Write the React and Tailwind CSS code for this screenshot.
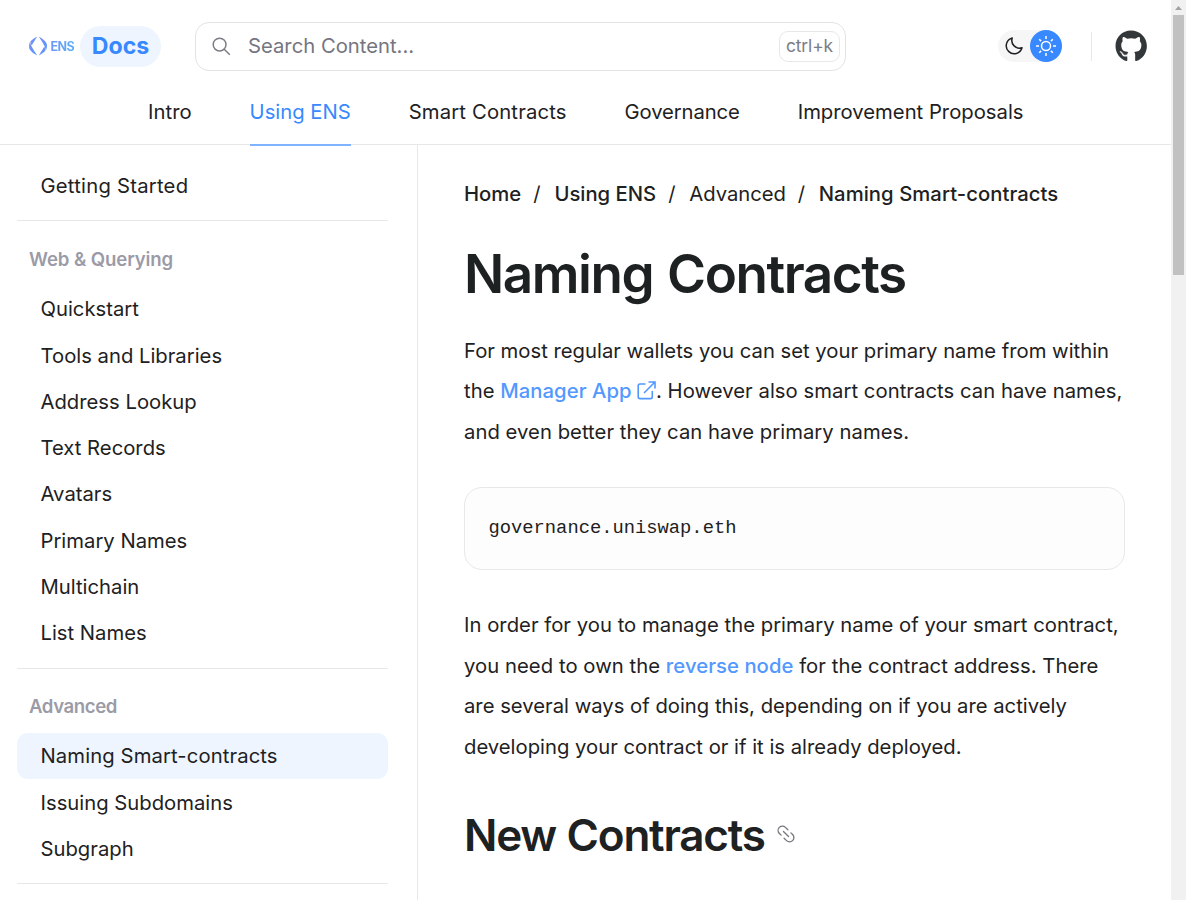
import React from "react";
import { FaGithub } from "react-icons/fa";

const nav = [
  { label: "Intro", track: "tracking-[0.05px]" },
  { label: "Using ENS", track: "tracking-[0px]" },
  { label: "Smart Contracts", track: "tracking-[0.16px]" },
  { label: "Governance", track: "tracking-[-0.1px]" },
  { label: "Improvement Proposals", track: "tracking-[0px]" },
];
const web = ["Quickstart", "Tools and Libraries", "Address Lookup", "Text Records", "Avatars", "Primary Names", "Multichain", "List Names"];
const advanced = ["Naming Smart-contracts", "Issuing Subdomains", "Subgraph"];

function Item({ label, active, track = "tracking-[0px]" }) {
  return (
    <a className={`flex h-[46.28px] shrink-0 items-center rounded-[11px] pl-[23.5px] ${track} ${active ? "bg-[#eef5ff]" : ""}`}>{label}</a>
  );
}

function Logo() {
  return (
    <div className="flex w-[46px] items-center gap-[3.5px]">
      <svg className="shrink-0" width="18" height="20" viewBox="0 0 18 20">
        <defs>
          <linearGradient id="ens" x1="0" y1="0" x2="1" y2="1">
            <stop offset="0" stopColor="#7d8cf5" />
            <stop offset="1" stopColor="#5298ff" />
          </linearGradient>
        </defs>
        <g fill="url(#ens)">
          <path d="M8.2 .4 L2.8 9.3 C1.6 8.2 1.1 6.6 1.9 5 C2.6 3.8 6.2 1.6 8.2 .4Z" />
          <path d="M.1 11.2 C-.1 8.8.5 6.7 1.3 5.6 C1 8.6 3.7 12.4 8.2 19.6 C5.3 17.6.4 15.1.1 11.2Z" />
          <path d="M9.8 19.6 L15.2 10.7 C16.4 11.8 16.9 13.4 16.1 15 C15.4 16.2 11.8 18.4 9.8 19.6Z" />
          <path d="M17.9 8.8 C18.1 11.2 17.5 13.3 16.7 14.4 C17 11.4 14.3 7.6 9.8.4 C12.7 2.4 17.6 4.9 17.9 8.8Z" />
        </g>
      </svg>
      <span className="bg-linear-to-r from-[#6a97f6] to-[#5aaef8] bg-clip-text pt-[1px] text-[12.5px] font-bold leading-[20px] tracking-[-0.5px] text-transparent">ENS</span>
    </div>
  );
}

function Sun() {
  return (
    <svg width="20" height="20" viewBox="0 0 20 20" fill="none" stroke="white" strokeWidth="1.5">
      <circle cx="10" cy="10" r="4.5" />
      <path d="M10 0v3M10 17v3M0 10h3M17 10h3M3.2 3.2l1.9 1.9M14.9 14.9l1.9 1.9M3.2 16.8l1.9-1.9M14.9 5.1l1.9-1.9" />
    </svg>
  );
}

export default function App() {
  return (
    <div className="flex h-[900px] w-[1186px] overflow-hidden bg-white font-['Inter',sans-serif] text-[20.25px] leading-[28px] tracking-[0px] text-[#1e2122]">
      <div className="flex w-[1171px] shrink-0 flex-col">
        <header className="flex h-[145px] shrink-0 flex-col border-b border-[#e8e8e8]">
          <div className="flex h-[93px] items-center pl-[29px]">
            <Logo />
            <div className="ml-[5px] flex h-[41px] w-[81px] items-center justify-center rounded-full bg-[#eef5ff] text-[23.1px] font-bold text-[#3889ff]">Docs</div>
            <div className="ml-[34px] flex h-[49px] w-[651px] items-center rounded-[14px] border border-[#e3e3e3] pl-[16.3px] pr-[5px]">
              <svg width="19" height="19" viewBox="0 0 19 19" fill="none" stroke="#7c7c85" strokeWidth="1.5">
                <circle cx="7.6" cy="7.6" r="6.4" /><path d="M12.2 12.2l5.6 5.6" />
              </svg>
              <span className="ml-[16.7px] text-[#75757f]">Search Content...</span>
              <kbd className="ml-auto flex h-[31px] w-[61px] items-center justify-center rounded-[9px] border border-[#e8e8e8] font-['Inter',sans-serif] text-[17.4px] tracking-[-0.1px] text-[#7c7c85]">ctrl+k</kbd>
            </div>
            <div className="ml-[152px] flex h-[32px] w-[64px] items-center justify-between rounded-full bg-[#f6f6f6] pl-[7px]">
              <svg width="18" height="18" viewBox="0 0 18 18" fill="none" stroke="#1e2122" strokeWidth="1.5" strokeLinejoin="round">
                <path d="M7.2 1A8 8 0 1 0 17 10.8A7.8 7.8 0 0 1 7.2 1Z" />
              </svg>
              <span className="flex size-[32px] items-center justify-center rounded-full bg-[#3889ff]"><Sun /></span>
            </div>
            <span className="ml-[29px] h-[29px] w-px bg-[#e8e8e8]" />
            <FaGithub className="ml-[23px] size-[32.4px] text-[#333739]" />
          </div>
          <nav className="flex h-[52px] shrink-0 pl-[148px] gap-[57.9px]">
            {nav.map((n, i) => (
              <a key={n.label} className={`flex h-[54px] shrink-0 border-b-2 pt-[6px] ${n.track} ${i === 1 ? "border-[#7fb2ff] text-[#3889ff]" : "border-transparent"}`}>{n.label}</a>
            ))}
          </nav>
        </header>
        <div className="flex min-h-0 flex-1">
          <aside className="flex w-[418px] shrink-0 flex-col overflow-hidden border-r border-[#e8e8e8] pl-[17px] pr-[29px] pt-[18px]">
            <Item label="Getting Started" track="tracking-[0.23px]" />
            <div className="mt-[11px] h-px shrink-0 bg-[#e8e8e8]" />
            <h2 className="mt-[25px] mb-[12.9px] h-[27px] shrink-0 pl-[12px] text-[18.6px] font-semibold leading-[27px] tracking-[-0.1px] text-[#9b9ba7]">Web &amp; Querying</h2>
            {web.map((w) => <Item key={w} label={w} />)}
            <div className="mt-[11.8px] h-px shrink-0 bg-[#e8e8e8]" />
            <h2 className="mt-[24px] mb-[13.1px] h-[27px] shrink-0 pl-[12px] text-[18.6px] font-semibold leading-[27px] tracking-[-0.4px] text-[#9b9ba7]">Advanced</h2>
            {advanced.map((w, i) => <Item key={w} label={w} active={i === 0} track={i === 0 ? "tracking-[0.1px]" : "tracking-[0px]"} />)}
            <div className="mt-[10.9px] h-px shrink-0 bg-[#e8e8e8]" />
          </aside>
          <main className="flex min-w-0 flex-1 flex-col overflow-hidden pl-[46px] pr-[46px] pt-[35px]">
            <div className="flex h-[28px] shrink-0 whitespace-nowrap font-medium">
              <span>Home</span><span className="ml-[12px] mr-[13.9px] font-normal">/</span>
              <span>Using ENS</span><span className="ml-[12px] mr-[13.7px] font-normal">/</span>
              <span className="font-normal">Advanced</span><span className="ml-[11.7px] mr-[13.7px] font-normal">/</span>
              <span className="tracking-[0.06px]">Naming Smart-contracts</span>
            </div>
            <h1 className="mt-[31px] h-[70px] shrink-0 text-[53px] font-semibold leading-[70px] tracking-[-1.45px] [word-spacing:2px]">Naming Contracts</h1>
            <p className="mt-[21.7px] shrink-0 whitespace-nowrap leading-[40.5px]">
              For most regular wallets you can set your primary name from within<br />
              <span className="tracking-[0.045px]">the <a className="font-medium text-[#5298ff]">Manager App <svg className="inline-block align-[-2px]" width="19" height="19" viewBox="0 0 19 19" fill="none" stroke="currentColor" strokeWidth="1.6"><path d="M8.5 3H3Q1.2 3 1.2 4.8V15.8Q1.2 17.6 3 17.6H13.5Q15.3 17.6 15.3 15.8V10M7 12L17.7 1.3M11.5 1H18V7.5" /></svg></a>. However also smart contracts can have names,</span><br />
              <span className="tracking-[0.04px]">and even better they can have primary names.</span>
            </p>
            <pre className="mt-[34.9px] flex h-[83px] shrink-0 items-center rounded-[18px] border border-[#e8e8e8] bg-[#fdfdfd] pb-[1px] pl-[23.5px] font-['Liberation_Mono',monospace] text-[18.8px] tracking-[0px]">governance.uniswap.eth</pre>
            <p className="mt-[35.2px] shrink-0 whitespace-nowrap leading-[40.5px]">
              <span className="tracking-[0.025px]">In order for you to manage the primary name of your smart contract,</span><br />
              <span className="tracking-[0.05px]">you need to own the <a className="font-medium text-[#5298ff]">reverse node</a> for the contract address. There</span><br />
              are several ways of doing this, depending on if you are actively<br />
              developing your contract or if it is already deployed.
            </p>
            <div className="mt-[37.9px] flex shrink-0 items-center gap-[12px]">
              <h2 className="text-[44px] font-semibold leading-[60px] tracking-[-1.2px] [word-spacing:0.6px]">New Contracts</h2>
              <svg className="-mt-[2px]" width="18" height="18" viewBox="0 0 19 19" fill="none" stroke="#77777f" strokeWidth="1.4" strokeLinecap="round">
                <path d="M6.8 6.8l5.4 5.4M4.3 10.7L2.5 8.9A4.5 4.5 0 0 1 8.9 2.5L11.5 5.1M14.7 8.3L16.5 10.1A4.5 4.5 0 0 1 10.1 16.5L7.5 13.9" />
              </svg>
            </div>
          </main>
        </div>
      </div>
      <div className="flex w-[15px] shrink-0 flex-col items-center bg-[#f1f1f1]">
        <svg className="shrink-0" width="15" height="15" viewBox="0 0 15 15" fill="#a3a3a3"><path d="M4 10L7.5 6L11 10Z" /></svg>
        <div className="h-[260px] w-[11px] bg-[#c1c1c1]" />
      </div>
    </div>
  );
}
